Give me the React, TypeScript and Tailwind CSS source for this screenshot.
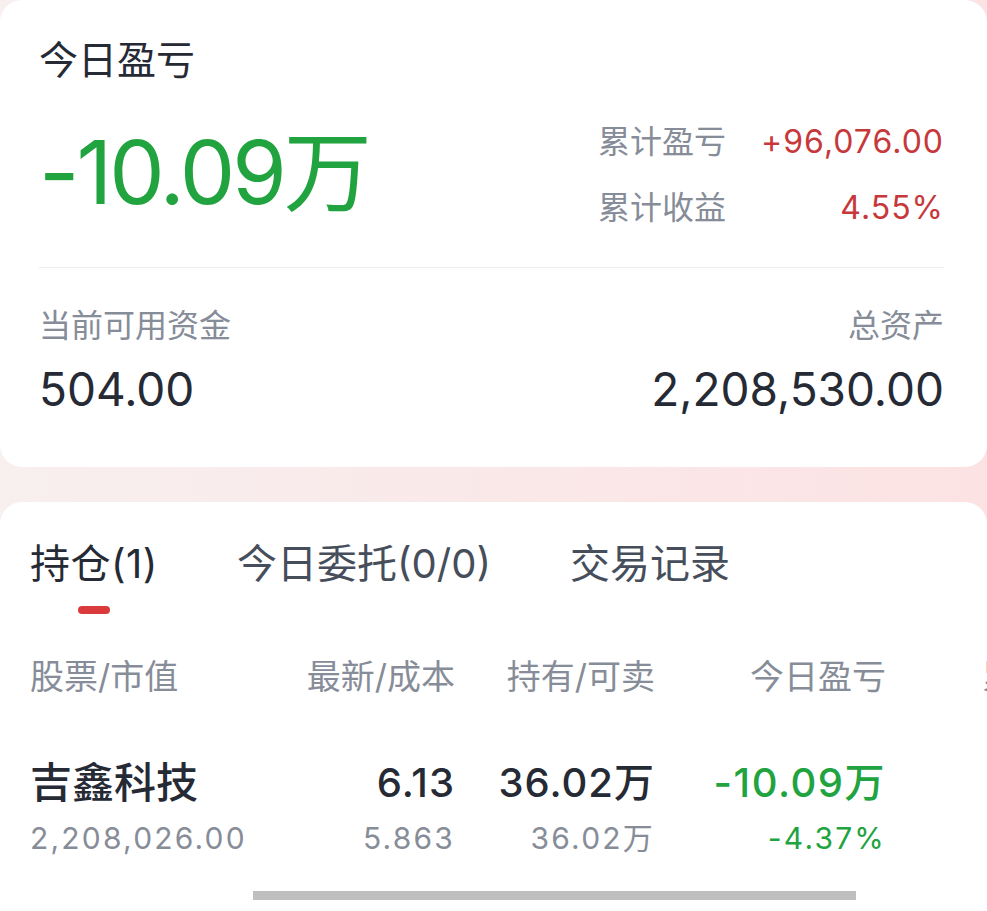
import React from "react";

const FONT = { fontFamily: "Inter, 'Noto Sans CJK SC', sans-serif" };

function Stat({ label, value }: { label: string; value: string }) {
  return (
    <div className="flex items-center justify-between w-[346px] h-[32px] leading-none">
      <span className="text-[32px] text-[#868c98]">{label}</span>
      <span className="text-[32px] text-[#c7383b] tracking-[1px]">{value}</span>
    </div>
  );
}

export default function App() {
  return (
    <div
      className="w-[987px] h-[911px] overflow-hidden bg-gradient-to-r from-[#f8efef] to-[#fce2e3]"
      style={FONT}
    >
      {/* Summary card */}
      <div className="h-[467px] bg-white rounded-[22px] pl-[39px] pr-[43px] pt-[40px] flex flex-col">
        <div className="text-[39px] leading-none text-[#262a35] h-[39px]">今日盈亏</div>
        <div className="flex justify-between items-start">
          <div className="mt-[49px] text-[88px] leading-none text-[#21a33f] tracking-[-3px] h-[88px]">
            -10.09万
          </div>
          <div className="mt-[47px] flex flex-col gap-[34px]">
            <Stat label="累计盈亏" value="+96,076.00" />
            <Stat label="累计收益" value="4.55%" />
          </div>
        </div>
        <div className="mt-[43px] h-px bg-[#ececec]" />
        <div className="mt-[42px] flex justify-between">
          <div className="flex flex-col">
            <span className="text-[32px] leading-none text-[#868c98] h-[32px]">当前可用资金</span>
            <span className="mt-[24px] text-[46px] leading-none text-[#252a35] h-[46px]">504.00</span>
          </div>
          <div className="flex flex-col items-end">
            <span className="text-[32px] leading-none text-[#868c98] h-[32px]">总资产</span>
            <span className="mt-[24px] text-[46px] leading-none text-[#252a35] h-[46px]">2,208,530.00</span>
          </div>
        </div>
      </div>

      {/* Positions card */}
      <div className="mt-[35px] h-[500px] bg-white rounded-t-[22px] pl-[30px] pt-[42px] overflow-hidden">
        <div className="flex gap-[79px] text-[40px] leading-none">
          <div className="flex flex-col items-center">
            <span className="h-[40px] text-[#252a35] tracking-[0.5px]">持仓(1)</span>
            <span className="mt-[22px] w-[32px] h-[8px] rounded-full bg-[#da3a3c]" />
          </div>
          <div className="flex flex-col items-center">
            <span className="h-[40px] text-[#464e5b]">今日委托(0/0)</span>
          </div>
          <div className="flex flex-col items-center">
            <span className="h-[40px] text-[#464e5b]">交易记录</span>
          </div>
        </div>

        <div className="mt-[46px] flex text-[34px] leading-none text-[#878d98] whitespace-nowrap">
          <div className="w-[230px] shrink-0">股票/市值</div>
          <div className="w-[195px] shrink-0 text-right">最新/成本</div>
          <div className="w-[200px] shrink-0 text-right">持有/可卖</div>
          <div className="w-[231px] shrink-0 text-right">今日盈亏</div>
          <div className="w-[232px] shrink-0 text-right">累计盈亏</div>
        </div>

        <div className="mt-[68px] flex whitespace-nowrap">
          <div className="w-[230px] shrink-0 flex flex-col">
            <span className="text-[42px] leading-[42px] font-medium text-[#252a35]">吉鑫科技</span>
            <span className="mt-[19px] text-[30px] leading-none text-[#878d98] tracking-[2.2px]">2,208,026.00</span>
          </div>
          <div className="w-[195px] shrink-0 flex flex-col items-end">
            <span className="text-[40px] leading-[42px] font-medium text-[#252a35] tracking-[1px]">6.13</span>
            <span className="mt-[19px] text-[30px] leading-none text-[#878d98] tracking-[2.2px]">5.863</span>
          </div>
          <div className="w-[200px] shrink-0 flex flex-col items-end">
            <span className="text-[40px] leading-[42px] font-medium text-[#252a35] tracking-[1px]">36.02万</span>
            <span className="mt-[19px] text-[30px] leading-none text-[#878d98] tracking-[2.2px]">36.02万</span>
          </div>
          <div className="w-[231px] shrink-0 flex flex-col items-end">
            <span className="text-[40px] leading-[42px] font-medium text-[#21a33f] tracking-[1.5px]">-10.09万</span>
            <span className="mt-[19px] text-[30px] leading-none text-[#21a33f] tracking-[2.2px]">-4.37%</span>
          </div>
          <div className="w-[232px] shrink-0" />
        </div>

        <div className="mt-[38px] ml-[223px] w-[603px] h-[9px] bg-[#bfbfbf]" />
      </div>
    </div>
  );
}
